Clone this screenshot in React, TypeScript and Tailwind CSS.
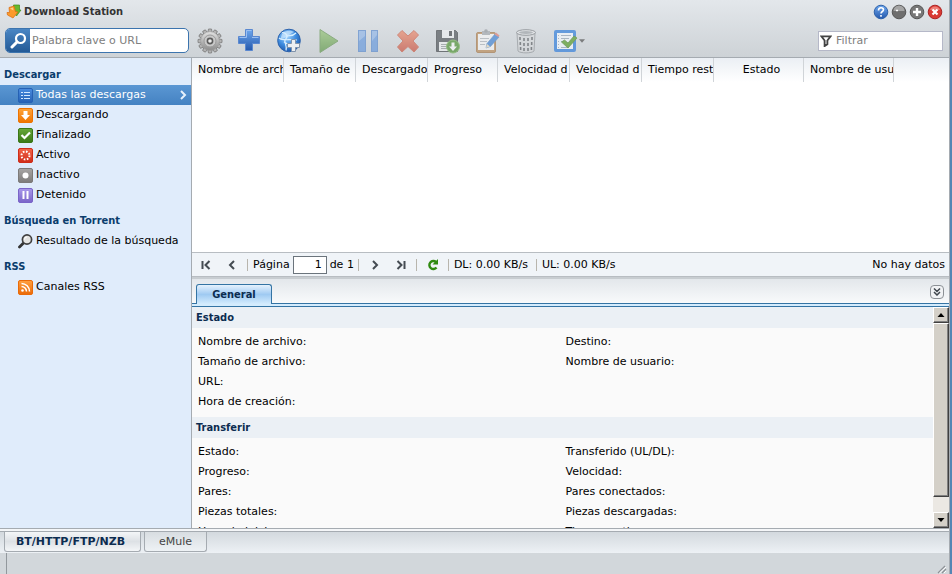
import React from 'react';

type IconProps = { className?: string };

const Defs: React.FC = () => (
  <svg width="0" height="0" className="absolute" aria-hidden="true">
    <defs>
      <linearGradient id="blue" x1="0" y1="0" x2="0" y2="1">
        <stop offset="0" stopColor="#6fa8ee" />
        <stop offset="1" stopColor="#2458ac" />
      </linearGradient>
      <linearGradient id="green" x1="0" y1="0" x2="0" y2="1">
        <stop offset="0" stopColor="#8fc26a" />
        <stop offset="1" stopColor="#4e8f35" />
      </linearGradient>
      <linearGradient id="red" x1="0" y1="0" x2="0" y2="1">
        <stop offset="0" stopColor="#f0805c" />
        <stop offset="1" stopColor="#c8402c" />
      </linearGradient>
      <linearGradient id="steel" x1="0" y1="0" x2="0" y2="1">
        <stop offset="0" stopColor="#e2e2e2" />
        <stop offset="1" stopColor="#8c8c8c" />
      </linearGradient>
      <radialGradient id="globe" cx="0.4" cy="0.3" r="0.8">
        <stop offset="0" stopColor="#a9d8ff" />
        <stop offset="0.5" stopColor="#3f8de0" />
        <stop offset="1" stopColor="#164a9c" />
      </radialGradient>
    </defs>
  </svg>
);

const teeth = [0, 30, 60, 90, 120, 150, 180, 210, 240, 270, 300, 330];

const GearIcon: React.FC = () => (
  <svg width="26" height="26" viewBox="0 0 26 26">
    {teeth.map((angle) => (
      <path key={angle} d="M10.800 5l.7-4h3l.7 4z" fill="#b4b4b4" stroke="#7c7c7c" strokeWidth="0.8" transform={`rotate(${angle} 13 13)`} />
    ))}
    <circle cx="13" cy="13" r="9.4" fill="url(#steel)" stroke="#9a9a9a" strokeWidth="0.6" />
    <circle cx="13" cy="13" r="6" fill="#c9c9c9" stroke="#9c9c9c" strokeWidth="1" />
    <circle cx="13" cy="13" r="2.6" fill="#ececec" stroke="#5c5c5c" strokeWidth="1.6" />
  </svg>
);

const PlusIcon: React.FC = () => (
  <svg width="24" height="24" viewBox="0 0 24 24">
    <path d="M8.500 1.500h7v7h7v7h-7v7h-7v-7h-7v-7h7z" fill="url(#blue)" stroke="#5a88d0" strokeWidth="1" />
    <path d="M2.500 9.500h7v-7h5M15 9.500h6.500" fill="none" stroke="#9cc0f2" strokeWidth="1" />
  </svg>
);

const GlobeAddIcon: React.FC = () => (
  <svg width="26" height="26" viewBox="0 0 26 26">
    <circle cx="13" cy="12.500" r="11.300" fill="url(#globe)" stroke="#2c62ac" strokeWidth="1" />
    <path d="M6 4.500c3 0 5 2 5 4s-3 3-2 6 2 5 1 8M11 8c3-1 5 1 9-3M3 10c3 3 9 1 18 2M8 14c4 3 8 3 12 0" fill="none" stroke="#d8efff" strokeWidth="1.200" />
    <path d="M6 6c3-4 9-4 12-2-4 2-5 3-7 5-2 1-4 1-7 3z" fill="#d8efff" opacity="0.600" />
    <path d="M15.500 11.500h4v4h4v4h-4v4h-4v-4h-4v-4h4z" fill="#eceff2" stroke="#8093aa" strokeWidth="1" />
  </svg>
);

const PlayIcon: React.FC = () => (
  <svg width="26" height="26" viewBox="0 0 26 26">
    <path d="M5 1.500L23 13 5 24.500z" fill="url(#green)" stroke="#5a8f45" strokeWidth="1" />
  </svg>
);

const PauseIcon: React.FC = () => (
  <svg width="26" height="26" viewBox="0 0 26 26">
    <rect x="3.500" y="2.500" width="7" height="21" fill="#5a92de" stroke="#4a80cc" />
    <rect x="16.500" y="2.500" width="6" height="21" fill="#5a92de" stroke="#4a80cc" />
    <path d="M4 3h6v5l-6 5zM17 3h5v4l-5 6z" fill="#a6c8f2" opacity="0.600" />
  </svg>
);

const RemoveIcon: React.FC = () => (
  <svg width="26" height="26" viewBox="0 0 26 26">
    <path d="M7 2.500L13 8l6-5.500L23.500 7l-5.500 6 5.500 6-4.500 5-6-5.500L7 24l-4.500-5L8 13 2.500 7z" fill="url(#red)" stroke="#cb5238" strokeWidth="1" strokeLinejoin="round" />
  </svg>
);

const SaveIcon: React.FC = () => (
  <svg width="26" height="26" viewBox="0 0 26 26">
    <path d="M2.500 2.500h19l2 2v19h-21z" fill="#3e4348" stroke="#303438" />
    <rect x="8" y="2" width="12" height="8" fill="#f0f2f4" />
    <rect x="15" y="3" width="3" height="5" fill="#303438" />
    <rect x="5" y="14" width="14" height="9" fill="#f2f4f5" />
    <path d="M7 16.500h7M7 18.500h6M7 20.500h6" stroke="#8d9296" />
    <circle cx="19" cy="18.500" r="6.500" fill="#3f8a20" stroke="#6cae4a" />
    <path d="M17.500 14.500h3v4H23l-4 4.500-4-4.500h2.500z" fill="#fff" />
  </svg>
);

const EditIcon: React.FC = () => (
  <svg width="26" height="26" viewBox="0 0 26 26">
    <rect x="2.500" y="4.500" width="19" height="20" rx="1.500" fill="#b98349" stroke="#a06c38" />
    <rect x="4" y="6" width="16" height="16" fill="#fafafa" />
    <path d="M8 3h8v4H8z" fill="#9da2a7" />
    <circle cx="12" cy="3" r="1.800" fill="#8b9095" />
    <path d="M6 10.500h9M6 13.500h7M6 16.500h5" stroke="#aab0b6" />
    <path d="M13 15.500L21 6l4 3-8.500 9.500L12 20z" fill="#2f7ad4" stroke="#326fb8" strokeWidth="0.600" />
    <path d="M20.500 6.500L22 4.500l3.500 3L24.500 9z" fill="#e07468" />
    <path d="M12 20l1-4 3 2.500z" fill="#f0dcb4" />
  </svg>
);

const BinIcon: React.FC = () => (
  <svg width="26" height="26" viewBox="0 0 26 26">
    <path d="M4 5l1 18c2 2.500 14 2.500 16 0l1-18z" fill="#d6d8da" stroke="#8c9094" />
    <ellipse cx="13" cy="4.500" rx="9.500" ry="2.800" fill="#e6e8ea" stroke="#707478" />
    <ellipse cx="13" cy="4.500" rx="7" ry="1.400" fill="#9a9ea2" />
    <path d="M7 9v3M7.300 14v3M7.600 19v3M11 10v3M11 15v3M11 20v3M15 10v3M15 15v3M15 20v3M19 9v3M18.700 14v3M18.400 19v3" fill="none" stroke="#4c5054" strokeWidth="1.600" />
  </svg>
);

const TaskIcon: React.FC = () => (
  <svg width="26" height="26" viewBox="0 0 26 26">
    <rect x="3.500" y="3.500" width="19" height="19" rx="0.500" fill="#f2f7fc" stroke="#3480dc" strokeWidth="3" />
    <path d="M6 7.500h1M6 10.500h1M6 13.500h1M6 16.500h1M6 19.500h1M9 7.500h10M9 10.500h8M9 13.500h3M9 19.500h8" stroke="#98a8b8" />
    <path d="M9.500 14l3-2 3.500 3L22 8l3 2-9 10z" fill="#5a9e2c" stroke="#4a8428" strokeWidth="0.800" />
  </svg>
);

const AppIcon: React.FC = () => (
  <svg width="16" height="16" viewBox="0 0 16 16">
    <path d="M7.500 1h6v5H15l-4.500 6L6 6h1.500z" fill="#68b82e" stroke="#3d8c1c" strokeWidth="0.700" />
    <path d="M3 3.500l5-1.500 1.500 5.500L12 8l-5 6-5.500-3L1 8.500h2.500z" fill="#fb9a2c" stroke="#d96c10" strokeWidth="0.700" />
    <path d="M4 4.500l3-1 .5 3z" fill="#ffd08a" />
  </svg>
);

const Tile: React.FC<{ from: string; to: string; children: React.ReactNode }> = ({ from, to, children }) => {
  const id = `t${from.slice(1)}`;
  return (
    <svg width="15" height="15" viewBox="0 0 15 15" className="shrink-0">
      <defs>
        <linearGradient id={id} x1="0" y1="0" x2="0" y2="1">
          <stop offset="0" stopColor={from} />
          <stop offset="1" stopColor={to} />
        </linearGradient>
      </defs>
      <rect x="0.500" y="0.500" width="14" height="14" rx="1.500" fill={`url(#${id})`} stroke={to} />
      {children}
    </svg>
  );
};

const ListTile = () => (
  <Tile from="#4a8ce0" to="#2561b4">
    <path d="M3 4.500h2M3 7.500h2M3 10.500h2M6 4.500h6M6 7.500h6M6 10.500h6" stroke="#d4e8ff" strokeWidth="1.200" />
  </Tile>
);
const DownTile = () => (
  <Tile from="#ffa53a" to="#ee7300">
    <path d="M5.500 3h4v4H12l-4.500 5L3 7h2.500z" fill="#fff" />
  </Tile>
);
const DoneTile = () => (
  <Tile from="#68a83a" to="#3a7716">
    <path d="M3.500 7l3 3L12 4.500" fill="none" stroke="#fff" strokeWidth="2.200" />
  </Tile>
);
const ActiveTile = () => (
  <Tile from="#f2654a" to="#cf2c18">
    <circle cx="7.500" cy="7.500" r="4" fill="none" stroke="#fff" strokeWidth="2" strokeDasharray="1.600 1.540" />
  </Tile>
);
const IdleTile = () => (
  <Tile from="#a8a6a5" to="#7c7a79">
    <circle cx="7.500" cy="7.500" r="3" fill="#fff" />
  </Tile>
);
const StopTile = () => (
  <Tile from="#a898ea" to="#7a64c8">
    <path d="M5.500 3v8M9.500 3v8" stroke="#fff" strokeWidth="2" />
  </Tile>
);
const RssTile = () => (
  <Tile from="#ffa040" to="#ea6a08">
    <circle cx="4.500" cy="10.500" r="1.300" fill="#fff" />
    <path d="M3.500 6.500a5 5 0 015 5M3.500 3.500a8 8 0 018 8" fill="none" stroke="#fff" strokeWidth="1.500" />
  </Tile>
);
const LensIcon = () => (
  <svg width="15" height="15" viewBox="0 0 15 15" className="shrink-0">
    <path d="M1.500 13L5 9.500" stroke="#333" strokeWidth="2.800" strokeLinecap="round" />
    <circle cx="9" cy="5.500" r="4.600" fill="#e4e4e2" stroke="#404040" strokeWidth="1.700" />
    <path d="M6.500 5.500A2.500 2.500 0 019 3" fill="none" stroke="#fff" />
  </svg>
);

const groups = [
  {
    title: 'Descargar',
    items: [
      { label: 'Todas las descargas', icon: ListTile, selected: true },
      { label: 'Descargando', icon: DownTile },
      { label: 'Finalizado', icon: DoneTile },
      { label: 'Activo', icon: ActiveTile },
      { label: 'Inactivo', icon: IdleTile },
      { label: 'Detenido', icon: StopTile },
    ],
  },
  { title: 'Búsqueda en Torrent', items: [{ label: 'Resultado de la búsqueda', icon: LensIcon }] },
  { title: 'RSS', items: [{ label: 'Canales RSS', icon: RssTile }] },
];

const columns = [
  { label: 'Nombre de arch', className: 'w-[92px]' },
  { label: 'Tamaño de', className: 'w-[72px]' },
  { label: 'Descargado', className: 'w-[72px]' },
  { label: 'Progreso', className: 'w-[70px]' },
  { label: 'Velocidad d', className: 'w-[72px]' },
  { label: 'Velocidad d', className: 'w-[72px]' },
  { label: 'Tiempo rest', className: 'w-[72px]' },
  { label: 'Estado', className: 'w-[90px] text-center' },
  { label: 'Nombre de usu', className: 'w-[90px]' },
];

const tools = [
  { label: 'Configuración', icon: GearIcon },
  { label: 'Crear', icon: PlusIcon },
  { label: 'Añadir URL', icon: GlobeAddIcon },
  { label: 'Reanudar', icon: PlayIcon, disabled: true },
  { label: 'Pausar', icon: PauseIcon, disabled: true },
  { label: 'Eliminar', icon: RemoveIcon, disabled: true },
  { label: 'Guardar', icon: SaveIcon, disabled: true },
  { label: 'Editar', icon: EditIcon, disabled: true },
  { label: 'Limpiar', icon: BinIcon, disabled: true },
];

const sections = [
  {
    title: 'Estado',
    rows: [
      ['Nombre de archivo:', 'Destino:'],
      ['Tamaño de archivo:', 'Nombre de usuario:'],
      ['URL:', ''],
      ['Hora de creación:', ''],
    ],
  },
  {
    title: 'Transferir',
    rows: [
      ['Estado:', 'Transferido (UL/DL):'],
      ['Progreso:', 'Velocidad:'],
      ['Pares:', 'Pares conectados:'],
      ['Piezas totales:', 'Piezas descargadas:'],
      ['Hora de inicio:', 'Tiempo activo:'],
    ],
  },
];

const headingFont = "font-['DejaVu_Sans_Condensed','DejaVu_Sans',sans-serif] font-bold";

const TitleBar: React.FC = () => (
  <header className="flex h-6 items-center justify-between pl-1.5 pr-1.5">
    <h1 className={`flex items-center gap-0.5 text-[#333] ${headingFont}`}>
      <AppIcon />
      Download Station
    </h1>
    <div className="flex gap-0.5">
      <button aria-label="Ayuda">
        <svg width="16" height="16" viewBox="0 0 16 16">
          <circle cx="8" cy="8" r="6.800" fill="url(#blue)" stroke="#2e62aa" />
          <path d="M5.500 6.500c0-3.500 5-3.500 5-.7 0 1.700-2.500 1.700-2.500 3.700M8 11v1.800" fill="none" stroke="#fff" strokeWidth="1.600" />
        </svg>
      </button>
      <button aria-label="Minimizar">
        <svg width="16" height="16" viewBox="0 0 16 16">
          <circle cx="8" cy="8" r="6.800" fill="#6e6e6e" stroke="#565656" />
          <path d="M2.500 7a5.500 5.500 0 0111 0z" fill="#a5a5a5" />
          <path d="M5 6.500h2" stroke="#fff" strokeWidth="1.500" />
        </svg>
      </button>
      <button aria-label="Maximizar">
        <svg width="16" height="16" viewBox="0 0 16 16">
          <circle cx="8" cy="8" r="6.800" fill="#777" stroke="#565656" />
          <path d="M8 4v8M4 8h8" stroke="#fff" strokeWidth="2.400" />
        </svg>
      </button>
      <button aria-label="Cerrar">
        <svg width="16" height="16" viewBox="0 0 16 16">
          <circle cx="8" cy="8" r="6.800" fill="#d93a34" stroke="#ac2424" />
          <path d="M3 6a5.300 5.300 0 0110 0z" fill="#ee8078" />
          <path d="M5.500 5.500l5 5M10.500 5.500l-5 5" stroke="#fff" strokeWidth="2.200" />
        </svg>
      </button>
    </div>
  </header>
);

const Toolbar: React.FC = () => (
  <div className="flex h-[34px] items-center border-b border-[#a5abb1] pl-[5px] pr-1.5">
    <div className="flex h-[25px] w-[184px] shrink-0 overflow-hidden rounded-[5px] border border-[#3c74ae] bg-white">
      <button aria-label="Buscar" className="flex w-6 items-center justify-center bg-linear-to-b from-[#4a86c4] to-[#235a96]">
        <svg width="17" height="17" viewBox="0 0 17 17">
          <path d="M2 15l5-5" stroke="#fff" strokeWidth="3" strokeLinecap="round" />
          <circle cx="10.500" cy="6.500" r="4.500" fill="none" stroke="#fff" strokeWidth="2.200" />
        </svg>
      </button>
      <input
        aria-label="Búsqueda"
        placeholder="Palabra clave o URL"
        className="min-w-0 flex-1 pl-0.5 outline-none placeholder:text-[#808080]"
      />
    </div>
    <div className="ml-px flex w-[356px] shrink-0">
      {tools.map(({ label, icon: Icon, disabled }) => (
        <button key={label} aria-label={label} disabled={disabled} className="flex flex-1 justify-center disabled:opacity-60">
          <Icon />
        </button>
      ))}
    </div>
    <button aria-label="Acción" disabled className="ml-1.5 flex items-center gap-px disabled:opacity-70">
      <TaskIcon />
      <svg width="6" height="4" viewBox="0 0 7 4">
        <path d="M0 0h7L3.500 4z" fill="#555" />
      </svg>
    </button>
    <label className="ml-auto flex h-5 w-[125px] items-center border border-[#b5b8c8] bg-white pl-px">
      <svg width="12" height="12" viewBox="0 0 13 13" className="shrink-0">
        <path d="M1.500 1.500h10L8 6v4l-3 2V6z" fill="none" stroke="#444" strokeWidth="2" />
      </svg>
      <input aria-label="Filtrar" placeholder="Filtrar" className="ml-0.5 min-w-0 flex-1 pl-0.5 outline-none placeholder:text-[#808080]" />
    </label>
  </div>
);

const Sidebar: React.FC = () => (
  <nav className="w-48 shrink-0 border-r border-[#a5abb1] bg-[#e0ecfb]">
    <div className="flex flex-col gap-1.5 pt-[7px]">
      {groups.map((group) => (
        <section key={group.title}>
          <h2 className={`pl-1 leading-5 text-[#0a3c6c] ${headingFont}`}>{group.title}</h2>
          {group.items.map(({ label, icon: Icon, selected }: { label: string; icon: React.FC; selected?: boolean }) => (
            <button
              key={label}
              className={`flex h-5 w-full items-center gap-[3px] pl-[18px] pr-1 ${
                selected ? 'bg-linear-to-b from-[#5b97d3] to-[#4482c2] text-white' : 'text-black'
              }`}
            >
              <Icon />
              <span className="whitespace-nowrap">{label}</span>
              {selected && (
                <svg width="7" height="10" viewBox="0 0 7 10" className="ml-auto">
                  <path d="M1 1l4 4-4 4" fill="none" stroke="#e8f2fc" strokeWidth="2" />
                </svg>
              )}
            </button>
          ))}
        </section>
      ))}
    </div>
  </nav>
);

const PageButton: React.FC<{ label: string; d: string; className?: string }> = ({ label, d, className }) => (
  <button aria-label={label} className={`flex w-4 justify-center ${className ?? ''}`}>
    <svg width="10" height="10" viewBox="0 0 10 10">
      <path d={d} fill="none" stroke="#444b52" strokeWidth="2" />
    </svg>
  </button>
);

const Separator: React.FC<IconProps> = ({ className }) => <span className={`h-3 w-px bg-[#b8b5ad] ${className ?? ''}`} />;

const Pager: React.FC = () => (
  <div className="flex h-[25px] shrink-0 items-center whitespace-nowrap border-y border-y-[#b8bdc2] bg-[#f0f4f8] pl-1.5 pr-1">
    <PageButton label="Primera" d="M1.500 1v8M8.500 1l-4 4 4 4" />
    <PageButton label="Anterior" d="M7 1L3 5l4 4" className="ml-2.5" />
    <Separator className="ml-[7px]" />
    <label className="ml-[5px] flex items-center gap-[3px]">
      Página
      <input defaultValue="1" className="h-[18px] w-[34px] border border-[#6b747c] bg-white pr-1 text-right outline-none" />
    </label>
    <span className="ml-[3px]">de 1</span>
    <Separator className="ml-1" />
    <PageButton label="Siguiente" d="M3 1l4 4-4 4" className="ml-2" />
    <PageButton label="Última" d="M1.500 1l4 4-4 4M8.500 1v8" className="ml-2.5" />
    <Separator className="ml-[7px]" />
    <button aria-label="Actualizar" className="ml-2 flex w-4 justify-center">
      <svg width="12" height="12" viewBox="0 0 12 12">
        <path d="M9.500 8.500A4 4 0 119 3" fill="none" stroke="#2f8a10" strokeWidth="2.400" />
        <path d="M11 0v5.500H5.500z" fill="#2f8a10" />
      </svg>
    </button>
    <Separator className="ml-[7px]" />
    <span className="ml-[5px]">DL: 0.00 KB/s</span>
    <Separator className="ml-2" />
    <span className="ml-[5px]">UL: 0.00 KB/s</span>
    <span className="ml-auto">No hay datos</span>
  </div>
);

const bevel = 'border border-t-white border-l-white border-r-[#404040] border-b-[#404040] bg-[#d4d0c8] shadow-[inset_-1px_-1px_0_#808080]';

const ScrollBar: React.FC = () => (
  <div className="flex w-4 shrink-0 flex-col bg-[#ebe8e3]">
    <button aria-label="Subir" className={`flex h-4 items-center justify-center ${bevel}`}>
      <svg width="8" height="4" viewBox="0 0 7 4">
        <path d="M0 4h7L3.500 0z" fill="#000" />
      </svg>
    </button>
    <div className={`h-[174px] ${bevel}`} />
    <button aria-label="Bajar" className={`mt-auto flex h-4 items-center justify-center ${bevel}`}>
      <svg width="8" height="4" viewBox="0 0 7 4">
        <path d="M0 0h7L3.500 4z" fill="#000" />
      </svg>
    </button>
  </div>
);

const Details: React.FC = () => (
  <section className="flex h-[251px] shrink-0 flex-col">
    <div className="flex h-[27px] shrink-0 items-end justify-between border-b border-[#3474a4] border-t-2 border-t-[#c8cdd1] bg-linear-to-b from-[#e3e7eb] to-[#f8fafb] pl-1 pr-[5px]">
      <button
        className={`-mb-px h-5 w-[76px] rounded-t-[3px] border border-b-0 border-[#3474a4] bg-linear-to-b from-[#e6f2fd] via-[#9fcaf2] to-[#d4ecfd] text-[#0c2c50] ${headingFont}`}
      >
        General
      </button>
      <button aria-label="Contraer" className="mb-1 flex size-3.5 items-center justify-center rounded-sm border border-[#8c9196] bg-[#f1f3f5]">
        <svg width="8" height="8" viewBox="0 0 8 8">
          <path d="M1 .5l3 3 3-3M1 4l3 3 3-3" fill="none" stroke="#3f464d" strokeWidth="1.500" />
        </svg>
      </button>
    </div>
    <div className="h-[3px] shrink-0 border-b border-[#3474a4] bg-[#d4ecfd]" />
    <div className="flex min-h-0 flex-1">
      <div className="min-w-0 flex-1 overflow-hidden bg-[#fafafa]">
        {sections.map((section) => (
          <section key={section.title}>
            <h3 className={`bg-[#ebf0f5] pl-1 leading-[21px] text-[#0c2c50] ${headingFont}`}>{section.title}</h3>
            <dl className="pb-[5px] pl-1.5 pt-1">
              {section.rows.map(([left, right]) => (
                <div key={left} className="grid grid-cols-2 leading-5">
                  <dt>{left}</dt>
                  <dt>{right}</dt>
                </div>
              ))}
            </dl>
          </section>
        ))}
      </div>
      <ScrollBar />
    </div>
  </section>
);

const App: React.FC = () => (
  <div className="h-screen overflow-hidden bg-[#5586b4] pr-0.5 font-['DejaVu_Sans',Verdana,sans-serif] text-[11px] leading-4 text-black">
    <Defs />
    <div className="flex h-full flex-col border-r border-[#a5abb1] bg-[#d2d7db]">
      <div className="shrink-0 bg-linear-to-b from-[#e3e7eb] to-[#cdd2d6]">
        <TitleBar />
        <Toolbar />
      </div>
      <div className="flex min-h-0 flex-1">
        <Sidebar />
        <main className="flex min-w-0 flex-1 flex-col">
          <div className="min-h-0 flex-1 bg-white">
            <div className="bg-linear-to-b from-[#ebeff4] to-white">
              <table className="border-separate border-spacing-0">
                <thead>
                  <tr>
                    {columns.map(({ label, className }, index) => (
                      <th key={index} className="p-0 text-left font-normal">
                        <div className={`overflow-hidden whitespace-nowrap border-r border-[#d0d4d8] pl-1.5 leading-6 ${className}`}>{label}</div>
                      </th>
                    ))}
                  </tr>
                </thead>
              </table>
            </div>
          </div>
          <Pager />
          <Details />
        </main>
      </div>
      <div className="h-1 shrink-0 border-y border-[#a5abb1] bg-[#f4f6f8]" />
      <div className="flex h-[21px] shrink-0 items-start gap-[3px] bg-linear-to-b from-[#d3d9de] to-[#edf1f5] pl-1">
        <button className="h-5 w-[137px] rounded-b-[3px] border border-t-0 border-[#a5abb1] bg-linear-to-b from-[#f4f6f8] via-[#dde1e5] to-[#f4f6f8] pr-1 font-bold text-[#0c2c50]">
          BT/HTTP/FTP/NZB
        </button>
        <button className="h-5 w-[63px] rounded-b-[3px] border border-t-0 border-[#a5abb1] bg-linear-to-b from-[#d8dde1] to-[#eef2f5] text-[#444]">
          eMule
        </button>
      </div>
      <footer className="flex h-[21px] shrink-0 items-end justify-between pl-1.5">
        <span className="h-full w-px bg-[#92989d]" />
        <svg width="12" height="9" viewBox="0 0 12 9">
          <path d="M1 8l7-7M5 8l4-4" stroke="#8c9196" strokeWidth="1.200" />
          <path d="M2.500 8l6.500-6M7 8l2-2" stroke="#fff" />
        </svg>
      </footer>
    </div>
  </div>
);

export default App;
